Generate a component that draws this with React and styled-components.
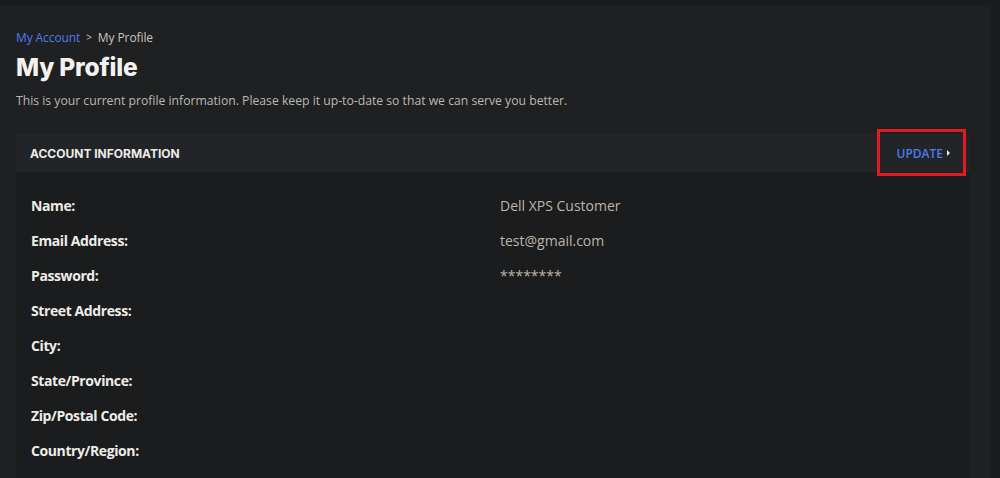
import React from 'react'
import styled, { createGlobalStyle } from 'styled-components'

const GlobalStyle = createGlobalStyle`
  html, body {
    margin: 0;
    padding: 0;
    background: #1a1b1d;
  }
  body {
    font-family: "Open Sans", "Liberation Sans", sans-serif;
  }
`

const Frame = styled.div`
  display: flex;
  height: 478px;
  padding-top: 5px;
  box-sizing: border-box;
  overflow: hidden;
`

const Page = styled.main`
  width: 991px;
  background: #1e2022;
  padding: 22px 22px 0 16px;
  box-sizing: border-box;
`

const Crumbs = styled.nav`
  display: flex;
  align-items: center;
  gap: 6px;
  font-size: 12px;
  color: #c9c5bd;
  height: 20px;
  letter-spacing: -0.1px;
`

const CrumbLink = styled.a`
  color: #4a7cf0;
  text-decoration: none;
`

const Sep = styled.span`
  font-size: 10px;
  color: #c9c5bd;
`

const Title = styled.h1`
  margin: 3px 0 0;
  font-family: Inter, "Open Sans", sans-serif;
  font-weight: 800;
  font-size: 24.5px;
  letter-spacing: -0.2px;
  color: #f4f2ee;
  line-height: 34px;
`

const Intro = styled.p`
  margin: 8px 0 0;
  font-size: 12.2px;
  color: #bdb8b0;
  line-height: 18px;
`

const Card = styled.section`
  margin-top: 24px;
  background: #1b1c1e;
  height: 400px;
`

const CardHead = styled.header`
  display: flex;
  align-items: center;
  justify-content: space-between;
  height: 38px;
  padding: 0 14px;
  background: #222427;
`

const HeadTitle = styled.h2`
  margin: 0;
  font-family: Inter, "Open Sans", sans-serif;
  font-weight: 700;
  font-size: 12px;
  color: #ecebe8;
`

const UpdateBox = styled.div`
  display: flex;
  align-items: center;
  gap: 4px;
  margin-right: -11px;
  padding: 2px 13px 0 17px;
  height: 47px;
  border: 3px solid #e01b24;
  box-sizing: border-box;
  transform: translateY(-1px);
`

const UpdateLink = styled.a`
  font-family: "Open Sans", sans-serif;
  font-weight: 600;
  font-size: 12px;
  color: #4a7cf0;
  text-decoration: none;
`

const Caret = styled.span`
  width: 0;
  height: 0;
  border-top: 3px solid transparent;
  border-bottom: 3px solid transparent;
  border-left: 3px solid #e8e8e8;
`

const Rows = styled.dl`
  margin: 0;
  padding: 24px 15px 0;
`

const Row = styled.div`
  display: grid;
  grid-template-columns: 469px 1fr;
  height: 35px;
  align-items: start;
`

const Label = styled.dt`
  font-weight: 700;
  font-size: 14px;
  color: #eeece8;
  line-height: 20px;
  letter-spacing: -0.4px;
`

const Value = styled.dd`
  margin: 0;
  font-size: 14px;
  color: #bdb5aa;
  line-height: 20px;
`

const fields = [
  ['Name:', 'Dell XPS Customer'],
  ['Email Address:', 'test@gmail.com'],
  ['Password:', '********'],
  ['Street Address:', ''],
  ['City:', ''],
  ['State/Province:', ''],
  ['Zip/Postal Code:', ''],
  ['Country/Region:', ''],
]

export default function App() {
  return (
    <>
      <GlobalStyle />
      <Frame>
        <Page>
          <Crumbs>
            <CrumbLink href="#">My Account</CrumbLink>
            <Sep>&gt;</Sep>
            <span>My Profile</span>
          </Crumbs>
          <Title>My Profile</Title>
          <Intro>
            This is your current profile information. Please keep it up-to-date so that we can serve you better.
          </Intro>
          <Card>
            <CardHead>
              <HeadTitle>ACCOUNT INFORMATION</HeadTitle>
              <UpdateBox>
                <UpdateLink href="#">UPDATE</UpdateLink>
                <Caret />
              </UpdateBox>
            </CardHead>
            <Rows>
              {fields.map(([label, value]) => (
                <Row key={label}>
                  <Label>{label}</Label>
                  <Value>{value}</Value>
                </Row>
              ))}
            </Rows>
          </Card>
        </Page>
      </Frame>
    </>
  )
}
